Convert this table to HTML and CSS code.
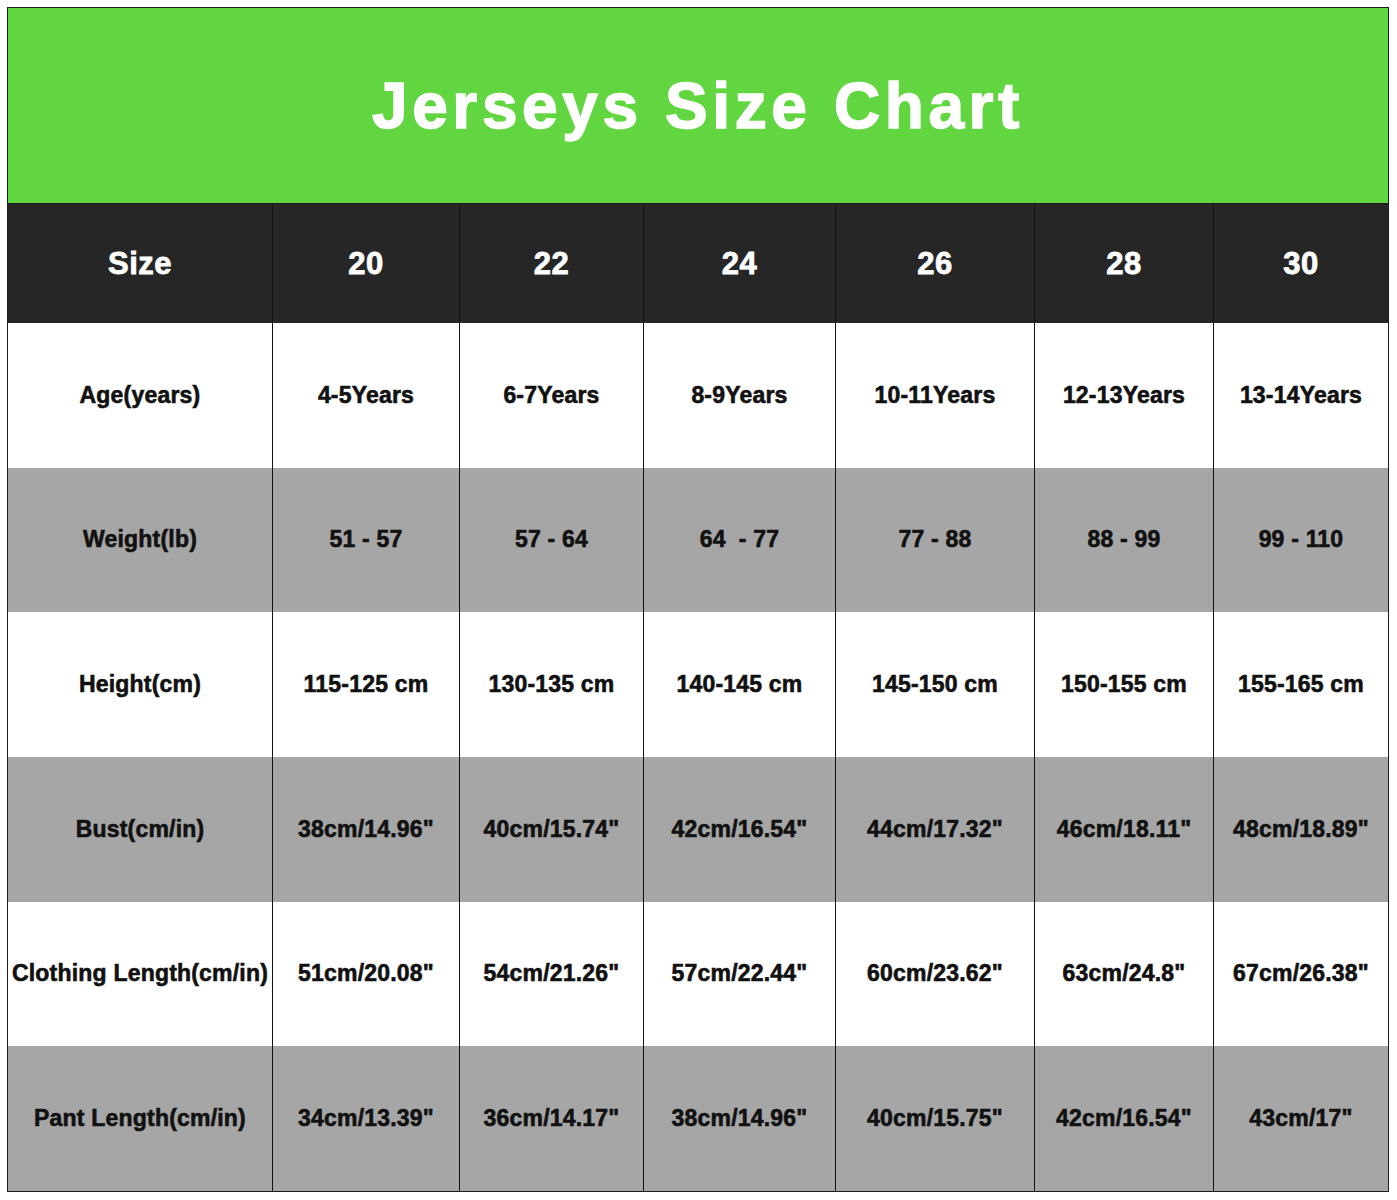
FILE: index.html
```html
<!DOCTYPE html>
<html>
<head>
<meta charset="utf-8">
<link rel="stylesheet" href="styles.css">
</head>
<body>
<div class="chart">
  <div class="title">Jerseys Size Chart</div>
  <div class="grid">
    <div class="cell head">Size</div>
    <div class="cell head">20</div>
    <div class="cell head">22</div>
    <div class="cell head">24</div>
    <div class="cell head">26</div>
    <div class="cell head">28</div>
    <div class="cell head">30</div>

    <div class="cell">Age(years)</div>
    <div class="cell">4-5Years</div>
    <div class="cell">6-7Years</div>
    <div class="cell">8-9Years</div>
    <div class="cell">10-11Years</div>
    <div class="cell">12-13Years</div>
    <div class="cell">13-14Years</div>

    <div class="cell gray">Weight(lb)</div>
    <div class="cell gray">51 - 57</div>
    <div class="cell gray">57 - 64</div>
    <div class="cell gray">64&nbsp; - 77</div>
    <div class="cell gray">77 - 88</div>
    <div class="cell gray">88 - 99</div>
    <div class="cell gray">99 - 110</div>

    <div class="cell">Height(cm)</div>
    <div class="cell">115-125 cm</div>
    <div class="cell">130-135 cm</div>
    <div class="cell">140-145 cm</div>
    <div class="cell">145-150 cm</div>
    <div class="cell">150-155 cm</div>
    <div class="cell">155-165 cm</div>

    <div class="cell gray">Bust(cm/in)</div>
    <div class="cell gray">38cm/14.96"</div>
    <div class="cell gray">40cm/15.74"</div>
    <div class="cell gray">42cm/16.54"</div>
    <div class="cell gray">44cm/17.32"</div>
    <div class="cell gray">46cm/18.11"</div>
    <div class="cell gray">48cm/18.89"</div>

    <div class="cell">Clothing Length(cm/in)</div>
    <div class="cell">51cm/20.08"</div>
    <div class="cell">54cm/21.26"</div>
    <div class="cell">57cm/22.44"</div>
    <div class="cell">60cm/23.62"</div>
    <div class="cell">63cm/24.8"</div>
    <div class="cell">67cm/26.38"</div>

    <div class="cell gray">Pant Length(cm/in)</div>
    <div class="cell gray">34cm/13.39"</div>
    <div class="cell gray">36cm/14.17"</div>
    <div class="cell gray">38cm/14.96"</div>
    <div class="cell gray">40cm/15.75"</div>
    <div class="cell gray">42cm/16.54"</div>
    <div class="cell gray">43cm/17"</div>
  </div>
</div>
</body>
</html>
```
FILE: styles.css
```css
html, body {
  margin: 0;
  padding: 0;
  background: #ffffff;
}
body {
  padding: 7px;
  font-family: "Liberation Sans", Arial, sans-serif;
}
.chart {
  width: 1380px;
  border: 1px solid #1c1c1c;
}
.title {
  height: 195px;
  background: #62d641;
  border-bottom: 1px solid #1a1a1a;
  display: flex;
  align-items: center;
  justify-content: center;
  color: #ffffff;
  font-weight: bold;
  font-size: 64px;
  letter-spacing: 4.6px;
  -webkit-text-stroke: 1.5px #ffffff;
}
.grid {
  display: grid;
  grid-template-columns: 264px 186px 183px 191px 198px 178px 174px;
  grid-template-rows: 119px repeat(6, 1fr);
  height: 987px;
  column-gap: 1px;
  background: #111111;
}
.cell {
  display: flex;
  align-items: center;
  justify-content: center;
  background: #ffffff;
  color: #111111;
  font-weight: bold;
  font-size: 23px;
  letter-spacing: 0.2px;
  -webkit-text-stroke: 0.6px #111111;
  white-space: nowrap;
}
.cell.gray {
  background: #a6a6a6;
}
.cell.head {
  background: #262626;
  color: #ffffff;
  font-size: 31px;
  letter-spacing: 0.5px;
  -webkit-text-stroke: 0.8px #ffffff;
}
```
